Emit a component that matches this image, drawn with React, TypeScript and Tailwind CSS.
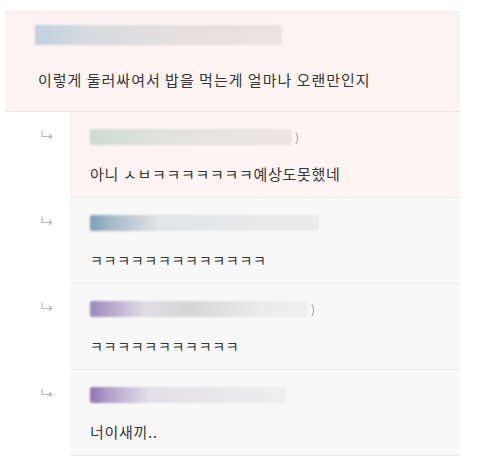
const font = { fontFamily: '"Noto Sans CJK KR", "Noto Sans", sans-serif' };

type Reply = {
  bar: string;
  barWidth: string;
  paren?: boolean;
  text: string;
  textSize: string;
  pink?: boolean;
};

const replies: Reply[] = [
  {
    bar: "bg-[linear-gradient(90deg,#cfdccf_0%,#e3e3dd_40%,#ece6e6_100%)]",
    barWidth: "w-[202px]",
    paren: true,
    text: "아니 ㅅㅂㅋㅋㅋㅋㅋㅋㅋ예상도못했네",
    textSize: "text-[15px]",
    pink: true,
  },
  {
    bar: "bg-[linear-gradient(90deg,#7f9cb8_0%,#a9bccb_10%,#e2e4e6_30%,#ececec_100%)]",
    barWidth: "w-[229px]",
    text: "ㅋㅋㅋㅋㅋㅋㅋㅋㅋㅋㅋㅋㅋ",
    textSize: "text-[14px]",
  },
  {
    bar: "bg-[linear-gradient(90deg,#9c87bd_0%,#b9aacd_10%,#e0dde4_25%,#d6d6d6_45%,#ececec_80%,#f0f0f0_100%)]",
    barWidth: "w-[218px]",
    paren: true,
    text: "ㅋㅋㅋㅋㅋㅋㅋㅋㅋㅋㅋ",
    textSize: "text-[14px]",
  },
  {
    bar: "bg-[linear-gradient(90deg,#8d73b0_0%,#b3a2cb_10%,#e2dfe6_30%,#efefef_100%)]",
    barWidth: "w-[196px]",
    text: "너이새끼..",
    textSize: "text-[15px]",
  },
];

const ReplyArrow = () => (
  <svg width="12" height="9" viewBox="0 0 12 9" fill="none" stroke="#b8b8b8" strokeWidth="1.2">
    <path d="M1 0.5V6.5H10.5" />
    <path d="M8 4L10.8 6.5L8 9" />
  </svg>
);

const ReplyRow = ({ r }: { r: Reply }) => (
  <div className="flex">
    <div className="w-[65px] shrink-0 pl-[36px] pt-[18px] bg-white">
      <ReplyArrow />
    </div>
    <div
      className={`flex-1 h-[86px] pl-[20px] pt-[17px] border-b border-[#ececec] ${
        r.pink ? "bg-[#fdf4f3]" : "bg-[#f8f8f8]"
      }`}
    >
      <div className="flex items-center h-[16px]">
        <div className={`${r.barWidth} h-[16px] rounded-[2px] blur-[1px] ${r.bar}`} />
        {r.paren && <span className="ml-[3px] text-[12px] text-[#999]">)</span>}
      </div>
      <div className={`mt-[19px] ${r.textSize} leading-[20px] tracking-[0.7px] text-[#363636]`}>{r.text}</div>
    </div>
  </div>
);

export default function App() {
  return (
    <div className="w-[480px] h-[463px] bg-white pt-[11px] pl-[5px] overflow-hidden" style={font}>
      <div className="w-[455px]">
        <div className="h-[101px] bg-[#fcf3f2] border-t border-b border-[#efe7e6] pl-[33px] pt-[13px]">
          <div className="w-[247px] h-[20px] -ml-[3px] blur-[1px] bg-[linear-gradient(90deg,#c0d1de_0%,#d6dade_20%,#e6e0e0_60%,#ebe3e3_100%)]" />
          <div className="mt-[25px] text-[15px] leading-[20px] text-[#363636] tracking-[1px]">
            이렇게 둘러싸여서 밥을 먹는게 얼마나 오랜만인지
          </div>
        </div>
        {replies.map((r, i) => (
          <ReplyRow key={i} r={r} />
        ))}
      </div>
    </div>
  );
}
